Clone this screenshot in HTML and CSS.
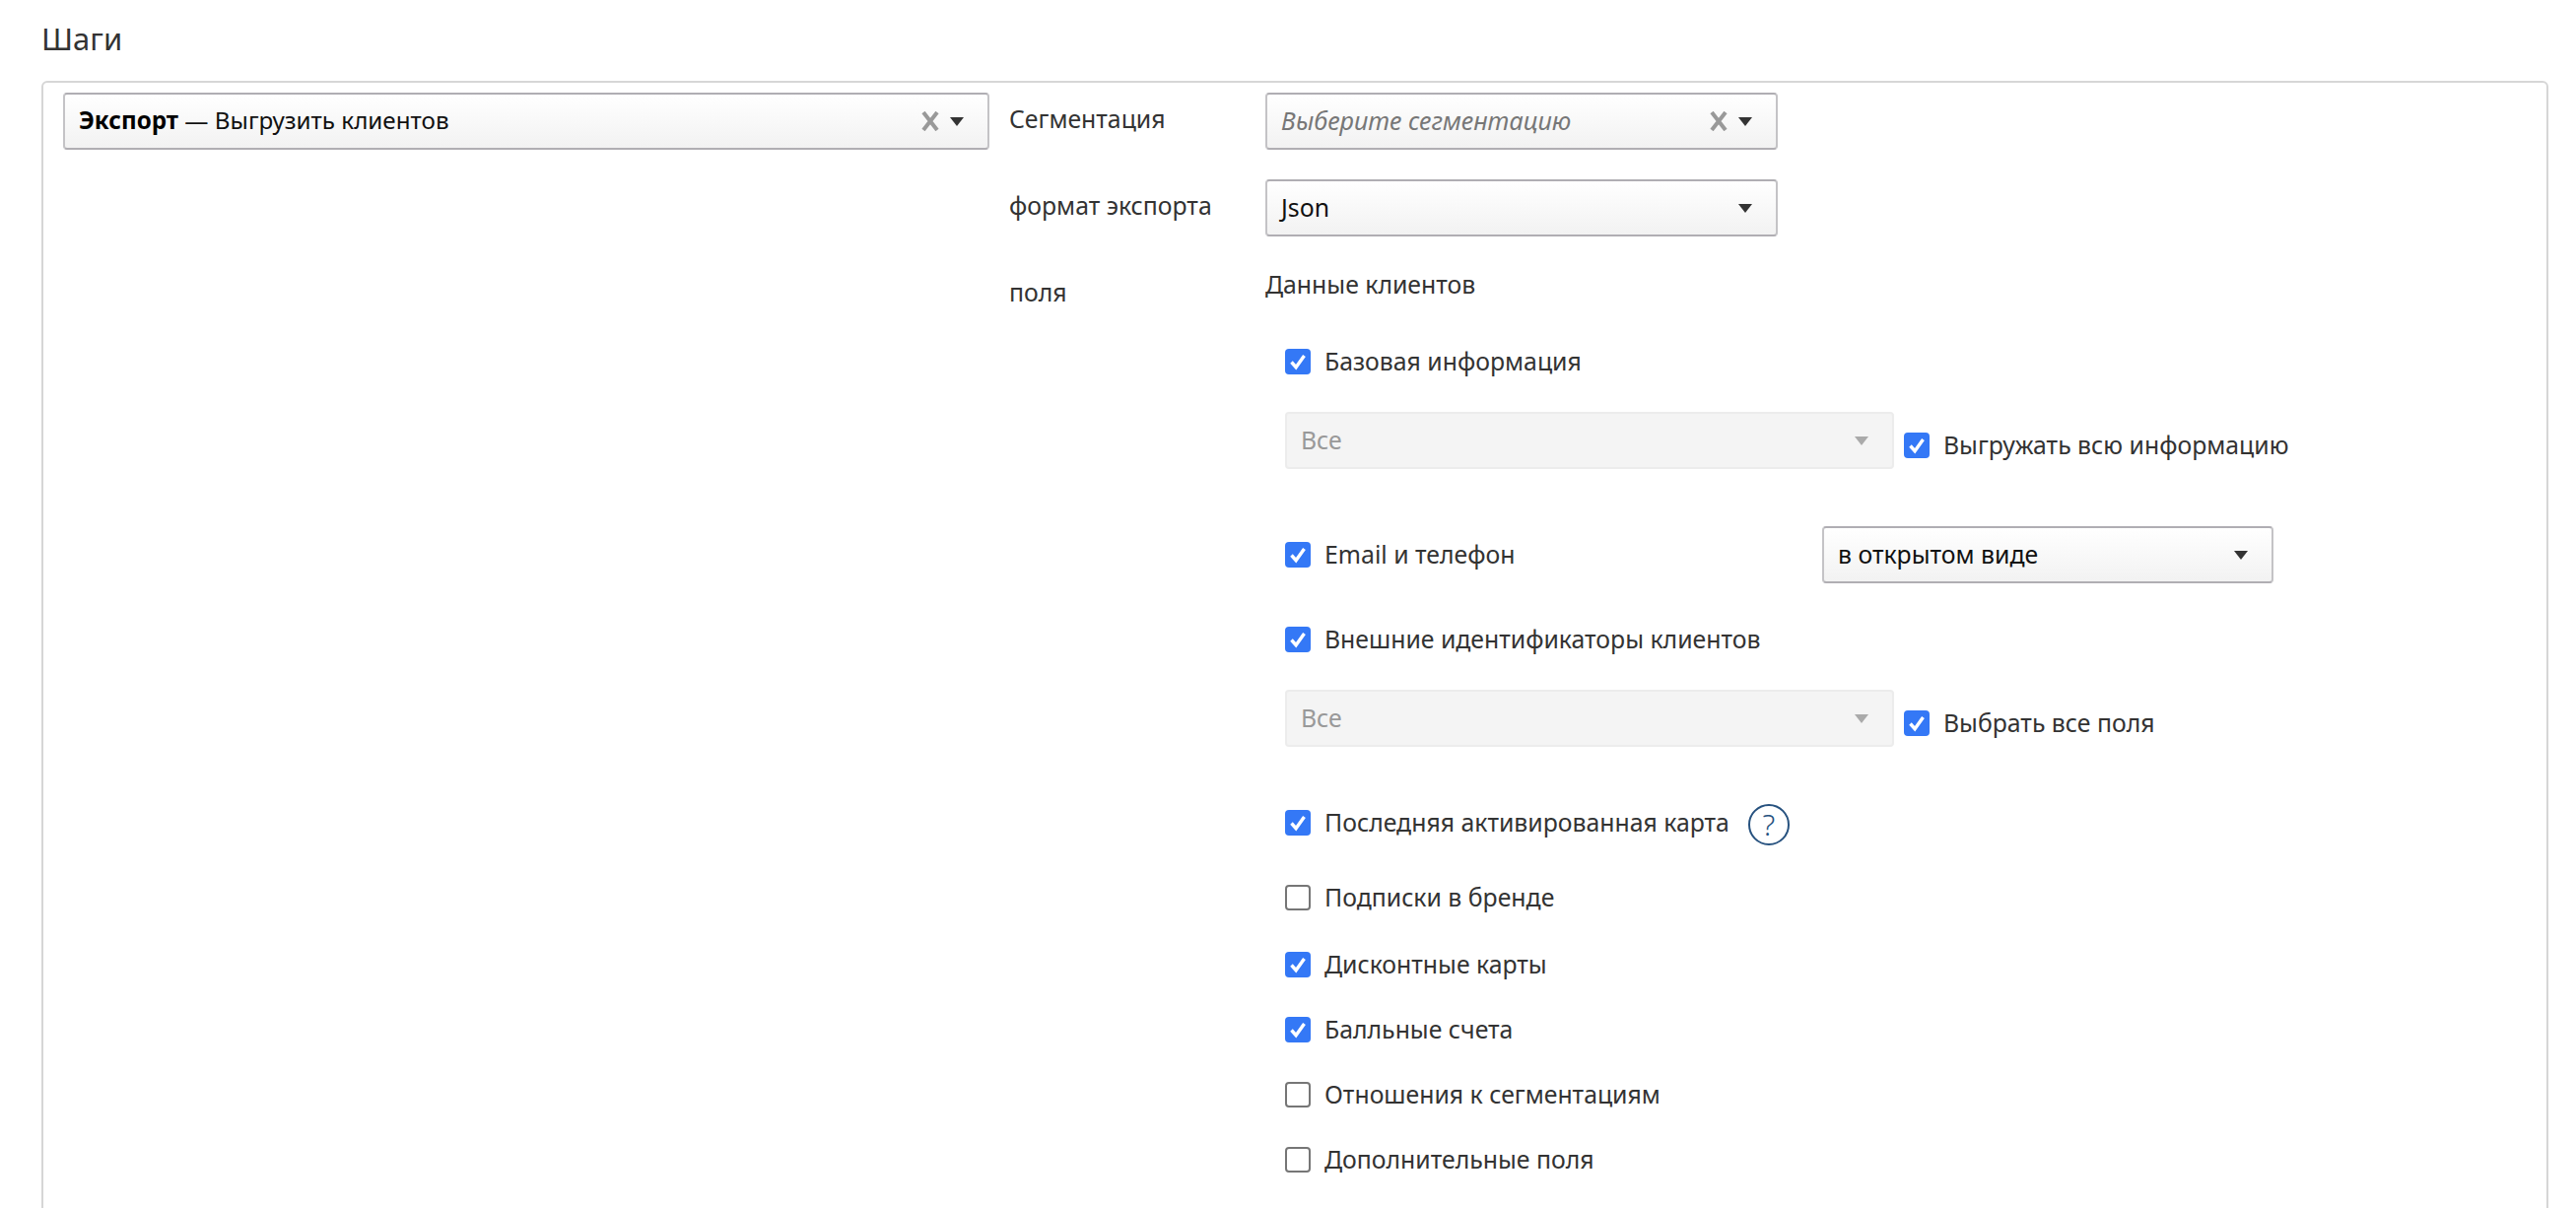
FILE: index.html
```html
<!DOCTYPE html>
<html lang="ru">
<head>
<meta charset="utf-8">
<title>Шаги</title>
<link rel="stylesheet" href="styles.css">
</head>
<body>
<svg class="defs" width="0" height="0"><defs>
<symbol id="tick" viewBox="0 0 26 26"><path d="M6.5 13.5l4.6 5.2L19.5 7" fill="none" stroke="#fff" stroke-width="3.4"/></symbol>
<symbol id="cross" viewBox="0 0 20 20"><path d="M3 1l14 18M17 1L3 19" fill="none" stroke="#999" stroke-width="4"/></symbol>
</defs></svg>
<main class="page">
  <h2 class="title">Шаги</h2>
  <section class="panel">
    <div class="step-col">
      <div class="select select-wide">
        <span class="select-text step-text"><b>Экспорт</b> — Выгрузить клиентов</span>
        <svg class="clear"><use href="#cross"/></svg><i class="arrow"></i>
      </div>
    </div>
    <div class="form">
      <div class="label">Сегментация</div>
      <div class="select select-main">
        <span class="select-text placeholder">Выберите сегментацию</span>
        <svg class="clear"><use href="#cross"/></svg><i class="arrow"></i>
      </div>
      <div class="label">формат экспорта</div>
      <div class="select select-main"><span class="select-text">Json</span><i class="arrow"></i></div>
      <div class="label">поля</div>
      <div class="fields">
        <div class="group-title">Данные клиентов</div>

        <label class="check-row row-basic"><span class="box on"><svg><use href="#tick"/></svg></span>Базовая информация</label>
        <div class="combo-row">
          <div class="select select-off"><span class="select-text">Все</span><i class="arrow"></i></div>
          <label class="check-row combo-check"><span class="box on"><svg><use href="#tick"/></svg></span>Выгружать всю информацию</label>
        </div>

        <div class="email-row">
          <label class="check-row"><span class="box on"><svg><use href="#tick"/></svg></span>Email и телефон</label>
          <div class="select select-open"><span class="select-text">в открытом виде</span><i class="arrow"></i></div>
        </div>

        <label class="check-row row-ext"><span class="box on"><svg><use href="#tick"/></svg></span>Внешние идентификаторы клиентов</label>
        <div class="combo-row">
          <div class="select select-off"><span class="select-text">Все</span><i class="arrow"></i></div>
          <label class="check-row combo-check"><span class="box on"><svg><use href="#tick"/></svg></span>Выбрать все поля</label>
        </div>

        <div class="card-row">
          <label class="check-row"><span class="box on"><svg><use href="#tick"/></svg></span>Последняя активированная карта</label>
          <span class="help">?</span>
        </div>
        <label class="check-row row-sub"><span class="box"></span>Подписки в бренде</label>
        <label class="check-row row-disc"><span class="box on"><svg><use href="#tick"/></svg></span>Дисконтные карты</label>
        <label class="check-row row-next"><span class="box on"><svg><use href="#tick"/></svg></span>Балльные счета</label>
        <label class="check-row row-next"><span class="box"></span>Отношения к сегментациям</label>
        <label class="check-row row-next"><span class="box"></span>Дополнительные поля</label>
      </div>
    </div>
  </section>
</main>
</body>
</html>
```
FILE: styles.css
```css
html, body { margin: 0; height: 1226px; overflow: hidden; background: #fff; }
body { font-family: "Noto Sans", "Open Sans", sans-serif; font-size: 24.8px; color: #333; }
.defs { position: absolute; }
.page { height: 1226px; overflow: hidden; padding: 0 28px 0 42px; }
.title { margin: 0; height: 82px; font-size: 31px; font-weight: 400; line-height: 78px; color: #333; }
.panel { display: flex; box-sizing: border-box; height: 1300px; padding: 10px 20px; border: 2px solid #d6d6d6; border-radius: 6px; }
.step-col { width: 940px; flex: none; margin-right: 20px; }
.form { display: grid; grid-template-columns: 260px 1fr; grid-auto-rows: min-content; row-gap: 30px; }
.label { line-height: 52px; color: #333; }
.select { display: flex; align-items: center; box-sizing: border-box; height: 58px; padding: 0 24px 0 14px; border: 2px solid #b0aeb3; border-left-color: #c4c3c6; border-right-color: #c4c3c6; border-radius: 4px; background: linear-gradient(#fff, #f2f2f2); color: #111; }
.select-wide { width: 940px; }
.select-main { width: 520px; }
.select-open { width: 458px; }
.select-off { width: 618px; background: #f4f4f4; border-color: #ececec; color: #999; }
.select-text { flex: 1; white-space: nowrap; margin-top: -3px; }
.select-text b { color: #000; }
.step-text { font-size: 24.2px; }
.placeholder { font-size: 25.2px; font-style: italic; color: #777; }
.clear { width: 20px; height: 20px; margin-right: 10px; }
.arrow { width: 0; height: 0; border: solid transparent; border-width: 9px 7px 0; border-top-color: #333; }
.select-off .arrow { border-top-color: #aaa; }
.fields { display: flex; flex-direction: column; align-items: flex-start; }
.group-title { height: 36px; line-height: 36px; }
.check-row { display: flex; align-items: center; box-sizing: border-box; height: 26px; padding-bottom: 3px; white-space: nowrap; color: #333; line-height: 24px; }
.box { align-self: flex-start; flex: none; box-sizing: border-box; width: 26px; height: 26px; margin-right: 14px; border: 2px solid #767676; border-radius: 4px; background: #fff; }
.box.on { border: 0; background: #3478f6; }
.box svg { display: block; width: 26px; height: 26px; }
.row-basic { margin: 48px 0 0 20px; }
.combo-row { display: flex; margin: 38px 0 0 20px; }
.combo-check { margin: 21px 0 0 10px; }
.email-row { display: flex; align-items: center; margin: 58px 0 0 20px; height: 58px; }
.email-row .check-row { width: 545px; }
.row-ext { margin-top: 44px; margin-left: 20px; }
.card-row { display: flex; align-items: flex-start; height: 42px; margin: 58px 0 0 20px; }
.card-row .check-row { margin-top: 6px; }
.help { box-sizing: border-box; width: 42px; height: 42px; margin-left: 19px; border: 2px solid #27527f; border-radius: 50%; text-align: center; font-size: 30px; font-weight: 300; line-height: 37px; color: #27527f; }
.row-sub { margin: 40px 0 0 20px; }
.row-disc { margin: 42px 0 0 20px; }
.row-next { margin: 40px 0 0 20px; }
```
